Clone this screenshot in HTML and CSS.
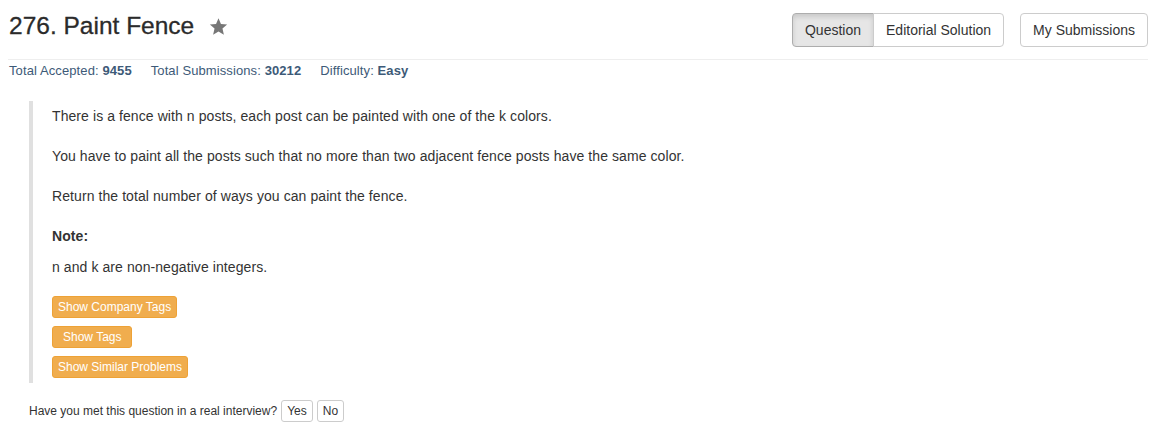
FILE: index.html
```html
<!DOCTYPE html>
<html>
<head>
<meta charset="utf-8">
<link rel="stylesheet" href="styles.css">
</head>
<body>
<div class="page">
  <div class="header">
    <h3 class="title">276. Paint Fence
      <svg class="star" width="19" height="19" viewBox="0 0 24 24"><path d="M12 1.5l3.1 7.2 7.8.7-5.9 5.2 1.8 7.7L12 18.3l-6.8 4 1.8-7.7-5.9-5.2 7.8-.7z" fill="#777"/></svg>
    </h3>
    <div class="tabs">
      <div class="btn-group">
        <span class="btn active">Question</span><span class="btn">Editorial Solution</span>
      </div>
      <span class="btn">My Submissions</span>
    </div>
  </div>
  <hr class="rule">
  <div class="stats">
    <span class="stat">Total Accepted: <b>9455</b></span>
    <span class="stat">Total Submissions: <b>30212</b></span>
    <span class="stat">Difficulty: <b>Easy</b></span>
  </div>
  <div class="question">
    <p>There is a fence with n posts, each post can be painted with one of the k colors.</p>
    <p>You have to paint all the posts such that no more than two adjacent fence posts have the same color.</p>
    <p>Return the total number of ways you can paint the fence.</p>
    <p class="note"><b>Note:</b></p>
    <p class="last">n and k are non-negative integers.</p>
    <div class="tags">
      <span class="tag">Show Company Tags</span>
      <span class="tag wide">Show Tags</span>
      <span class="tag">Show Similar Problems</span>
    </div>
  </div>
  <div class="interview">
    <span>Have you met this question in a real interview?</span>
    <span class="small-btn">Yes</span>
    <span class="small-btn">No</span>
  </div>
</div>
</body>
</html>
```
FILE: styles.css
```css
html, body {
  margin: 0;
  padding: 0;
  background: #fff;
}
body {
  font-family: "Liberation Sans", Arial, Helvetica, sans-serif;
  color: #333;
  font-size: 14px;
  line-height: 20px;
}
.page {
  width: 1140px;
  margin-left: 8px;
}
.header {
  display: flex;
  justify-content: space-between;
  align-items: flex-start;
  padding-top: 13px;
}
.title {
  margin: 0 0 0 1px;
  font-size: 24.5px;
  line-height: 26px;
  font-weight: normal;
  color: #2b2b2b;
  -webkit-text-stroke: 0.3px #2b2b2b;
  display: flex;
  align-items: center;
}
.star {
  margin-left: 15px;
  margin-top: 1px;
}
.tabs {
  display: flex;
  gap: 16px;
}
.btn-group {
  display: flex;
}
.btn {
  display: inline-block;
  box-sizing: border-box;
  height: 34px;
  padding: 6px 12px;
  font-size: 14px;
  line-height: 20px;
  border: 1px solid #ccc;
  border-radius: 4px;
  background: #fff;
  color: #333;
}
.btn-group .btn:first-child {
  border-top-right-radius: 0;
  border-bottom-right-radius: 0;
}
.btn-group .btn:last-child {
  border-top-left-radius: 0;
  border-bottom-left-radius: 0;
  margin-left: -1px;
}
.btn.active {
  background: #e6e6e6;
  border-color: #adadad;
  box-shadow: inset 0 3px 5px rgba(0,0,0,0.125);
}
.rule {
  margin: 12px 0 0 0;
  border: 0;
  border-top: 1px solid #eee;
}
.stats {
  margin-top: 2px;
  padding-left: 1px;
  font-size: 13px;
  line-height: 18px;
  color: #3d5a78;
  display: flex;
  gap: 19px;
  letter-spacing: 0.1px;
}
.stats b {
  font-weight: bold;
}
.question {
  margin: 21px 0 0 21px;
  border-left: 4px solid #e0e0e0;
  padding: 5px 20px 5px 19px;
  letter-spacing: 0.08px;
}
.question p {
  margin: 0 0 20px 0;
}
.question p.note {
  margin-bottom: 11px;
}
.question p.last {
  margin-bottom: 19px;
}
.tags {
  display: flex;
  flex-direction: column;
  align-items: flex-start;
  gap: 8px;
  letter-spacing: 0;
}
.tag {
  display: inline-block;
  box-sizing: border-box;
  height: 22px;
  padding: 1px 5px;
  font-size: 12px;
  line-height: 18px;
  color: #fff;
  background: #f0ad4e;
  border: 1px solid #eea236;
  border-radius: 3px;
}
.tag.wide {
  padding: 1px 10px;
}
.interview {
  margin: 17px 0 0 21px;
  display: flex;
  align-items: center;
  font-size: 12px;
  line-height: 18px;
}
.interview > span:first-child {
  margin-right: 4px;
}
.small-btn {
  display: inline-block;
  box-sizing: border-box;
  height: 22px;
  padding: 1px 5px;
  font-size: 12px;
  line-height: 18px;
  border: 1px solid #ccc;
  border-radius: 3px;
  background: #fff;
  color: #333;
  margin-right: 4px;
}
```
